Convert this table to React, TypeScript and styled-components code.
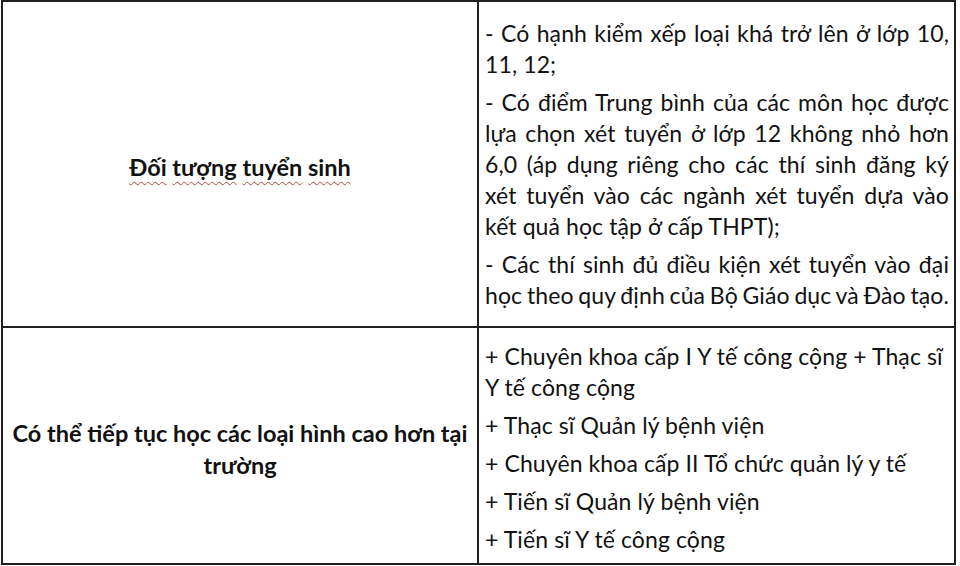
import React from 'react';
import styled, { createGlobalStyle } from 'styled-components';

const GlobalStyle = createGlobalStyle`
  html, body {
    margin: 0;
    padding: 0;
    background: #ffffff;
  }
  body {
    font-family: Lato, 'Open Sans', 'Liberation Sans', sans-serif;
    color: #111111;
  }
`;

const Table = styled.div`
  box-sizing: border-box;
  width: 955px;
  height: 565px;
  margin-left: 1px;
  display: grid;
  grid-template-columns: 476px 1fr;
  grid-template-rows: 326px 1fr;
  border: 2px solid #202020;
`;

const Cell = styled.div<{ $side: 'left' | 'right'; $last?: boolean }>`
  box-sizing: border-box;
  min-width: 0;
  border-right: ${(p) => (p.$side === 'left' ? '2px solid #202020' : 'none')};
  border-bottom: ${(p) => (p.$last ? 'none' : '2px solid #202020')};
`;

const TitleCell = styled(Cell)`
  display: flex;
  align-items: center;
  justify-content: center;
  padding: 6px 4px 0;
  font-size: 23.5px;
  font-weight: 700;
  line-height: 32px;
  text-align: center;
`;

const ContentCell = styled(Cell)<{ $top: number }>`
  display: flex;
  flex-direction: column;
  padding: ${(p) => p.$top}px 5px 0 6px;
  font-size: 23px;
  letter-spacing: 0.1px;
  line-height: 31px;
`;

const Paragraph = styled.div<{ $gap: number }>`
  & + & {
    margin-top: ${(p) => p.$gap}px;
  }
`;

const Line = styled.div<{ $fill?: boolean; $tight?: boolean }>`
  white-space: nowrap;
  text-align: ${(p) => (p.$fill ? 'justify' : 'left')};
  text-align-last: ${(p) => (p.$fill ? 'justify' : 'auto')};
  word-spacing: ${(p) => (p.$tight ? '-5px' : 'normal')};
`;

const Squiggle = styled.span`
  text-decoration: underline wavy #b5473f;
  text-decoration-thickness: 1px;
  text-underline-offset: 5px;
`;

const requirements: { lines: string[]; fillLast?: boolean }[] = [
  { lines: ['- Có hạnh kiểm xếp loại khá trở lên ở lớp 10,', '11, 12;'] },
  {
    lines: [
      '- Có điểm Trung bình của các môn học được',
      'lựa chọn xét tuyển ở lớp 12 không nhỏ hơn',
      '6,0 (áp dụng riêng cho các thí sinh đăng ký',
      'xét tuyển vào các ngành xét tuyển dựa vào',
      'kết quả học tập ở cấp THPT);',
    ],
  },
  {
    lines: [
      '- Các thí sinh đủ điều kiện xét tuyển vào đại',
      'học theo quy định của Bộ Giáo dục và Đào tạo.',
    ],
    fillLast: true,
  },
];

const programs: string[][] = [
  ['+ Chuyên khoa cấp I Y tế công cộng + Thạc sĩ', 'Y tế công cộng'],
  ['+ Thạc sĩ Quản lý bệnh viện'],
  ['+ Chuyên khoa cấp II Tổ chức quản lý y tế'],
  ['+ Tiến sĩ Quản lý bệnh viện'],
  ['+ Tiến sĩ Y tế công cộng'],
];

const App: React.FC = () => {
  const heading = 'Đối tượng tuyển sinh'.split(' ');

  return (
    <>
      <GlobalStyle />
      <Table>
        <TitleCell $side="left">
          <div>
            {heading.map((word, i) => (
              <React.Fragment key={word}>
                {i > 0 && ' '}
                <Squiggle>{word}</Squiggle>
              </React.Fragment>
            ))}
          </div>
        </TitleCell>
        <ContentCell $side="right" $top={16}>
          {requirements.map((para, pi) => (
            <Paragraph $gap={10} key={pi}>
              {para.lines.map((line, li) => {
                const isLast = li === para.lines.length - 1;
                return (
                  <Line key={li} $fill={!isLast || para.fillLast} $tight={isLast && para.fillLast}>
                    {line}
                  </Line>
                );
              })}
            </Paragraph>
          ))}
        </ContentCell>

        <TitleCell $side="left" $last>
          <div>
            Có thể tiếp tục học các loại hình cao hơn tại
            <br />
            trường
          </div>
        </TitleCell>
        <ContentCell $side="right" $top={13} $last>
          {programs.map((item, i) => (
            <Paragraph $gap={7} key={i}>
              {item.map((line) => (
                <Line key={line}>{line}</Line>
              ))}
            </Paragraph>
          ))}
        </ContentCell>
      </Table>
    </>
  );
};

export default App;
